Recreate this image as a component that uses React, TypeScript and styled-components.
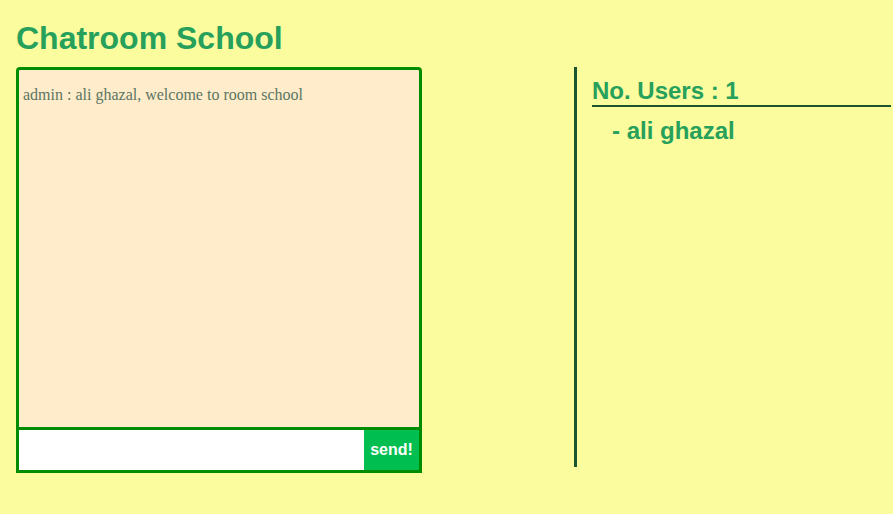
import React from "react";
import styled, { createGlobalStyle } from "styled-components";

const Global = createGlobalStyle`
  html, body {
    margin: 0;
    padding: 0;
    background: #fafc9e;
  }
  body {
    font-family: "Liberation Sans", Arial, sans-serif;
  }
`;

const Page = styled.div`
  display: flex;
  flex-direction: column;
  gap: 10px;
  padding: 20px 2px 0 16px;
  min-height: 514px;
  box-sizing: border-box;
`;

const Title = styled.h1`
  margin: 0;
  font-size: 32px;
  font-weight: bold;
  color: #26a05a;
  line-height: 37px;
`;

const Main = styled.div`
  display: flex;
  align-items: flex-start;
`;

const ChatBox = styled.div`
  width: 406px;
  height: 406px;
  box-sizing: border-box;
  border: 3px solid #008c00;
  border-radius: 4px 4px 0 0;
  display: flex;
  flex-direction: column;
  background: #ffecca;
`;

const Messages = styled.div`
  flex: 1;
  padding: 16px 4px;
  font-family: "Liberation Serif", "Times New Roman", serif;
  font-size: 16px;
  color: #5b7663;
`;

const Message = styled.div`
  line-height: 18px;
`;

const InputRow = styled.form`
  display: flex;
  height: 43px;
  box-sizing: border-box;
  border-top: 3px solid #008c00;
  margin: 0;
`;

const TextInput = styled.input`
  flex: 1;
  min-width: 0;
  border: none;
  outline: none;
  background: #ffffff;
  padding: 0 6px;
  font-size: 16px;
`;

const SendButton = styled.button`
  width: 55px;
  border: none;
  background: #00bf50;
  color: #ffffff;
  font-family: "Liberation Sans", Arial, sans-serif;
  font-weight: bold;
  font-size: 16px;
  padding: 0;
  cursor: pointer;
`;

const UsersPanel = styled.div`
  margin-left: 152px;
  flex: 1;
  height: 400px;
  box-sizing: border-box;
  border-left: 3px solid #1a5530;
  padding: 10px 0 0 15px;
`;

const UsersHeading = styled.h2`
  margin: 0;
  font-size: 24px;
  font-weight: bold;
  color: #26a05a;
  line-height: 28px;
  border-bottom: 2px solid #1a5530;
`;

const UserList = styled.ul`
  list-style: none;
  margin: 10px 0 0;
  padding: 0 0 0 20px;
`;

const UserItem = styled.li`
  font-size: 24px;
  font-weight: bold;
  color: #26a05a;
  line-height: 28px;
`;

export default function App() {
  return (
    <>
      <Global />
      <Page>
        <Title>Chatroom School</Title>
        <Main>
          <ChatBox>
            <Messages>
              <Message>admin : ali ghazal, welcome to room school</Message>
            </Messages>
            <InputRow onSubmit={(e) => e.preventDefault()}>
              <TextInput type="text" />
              <SendButton type="submit">send!</SendButton>
            </InputRow>
          </ChatBox>
          <UsersPanel>
            <UsersHeading>No. Users : 1</UsersHeading>
            <UserList>
              <UserItem>- ali ghazal</UserItem>
            </UserList>
          </UsersPanel>
        </Main>
      </Page>
    </>
  );
}
